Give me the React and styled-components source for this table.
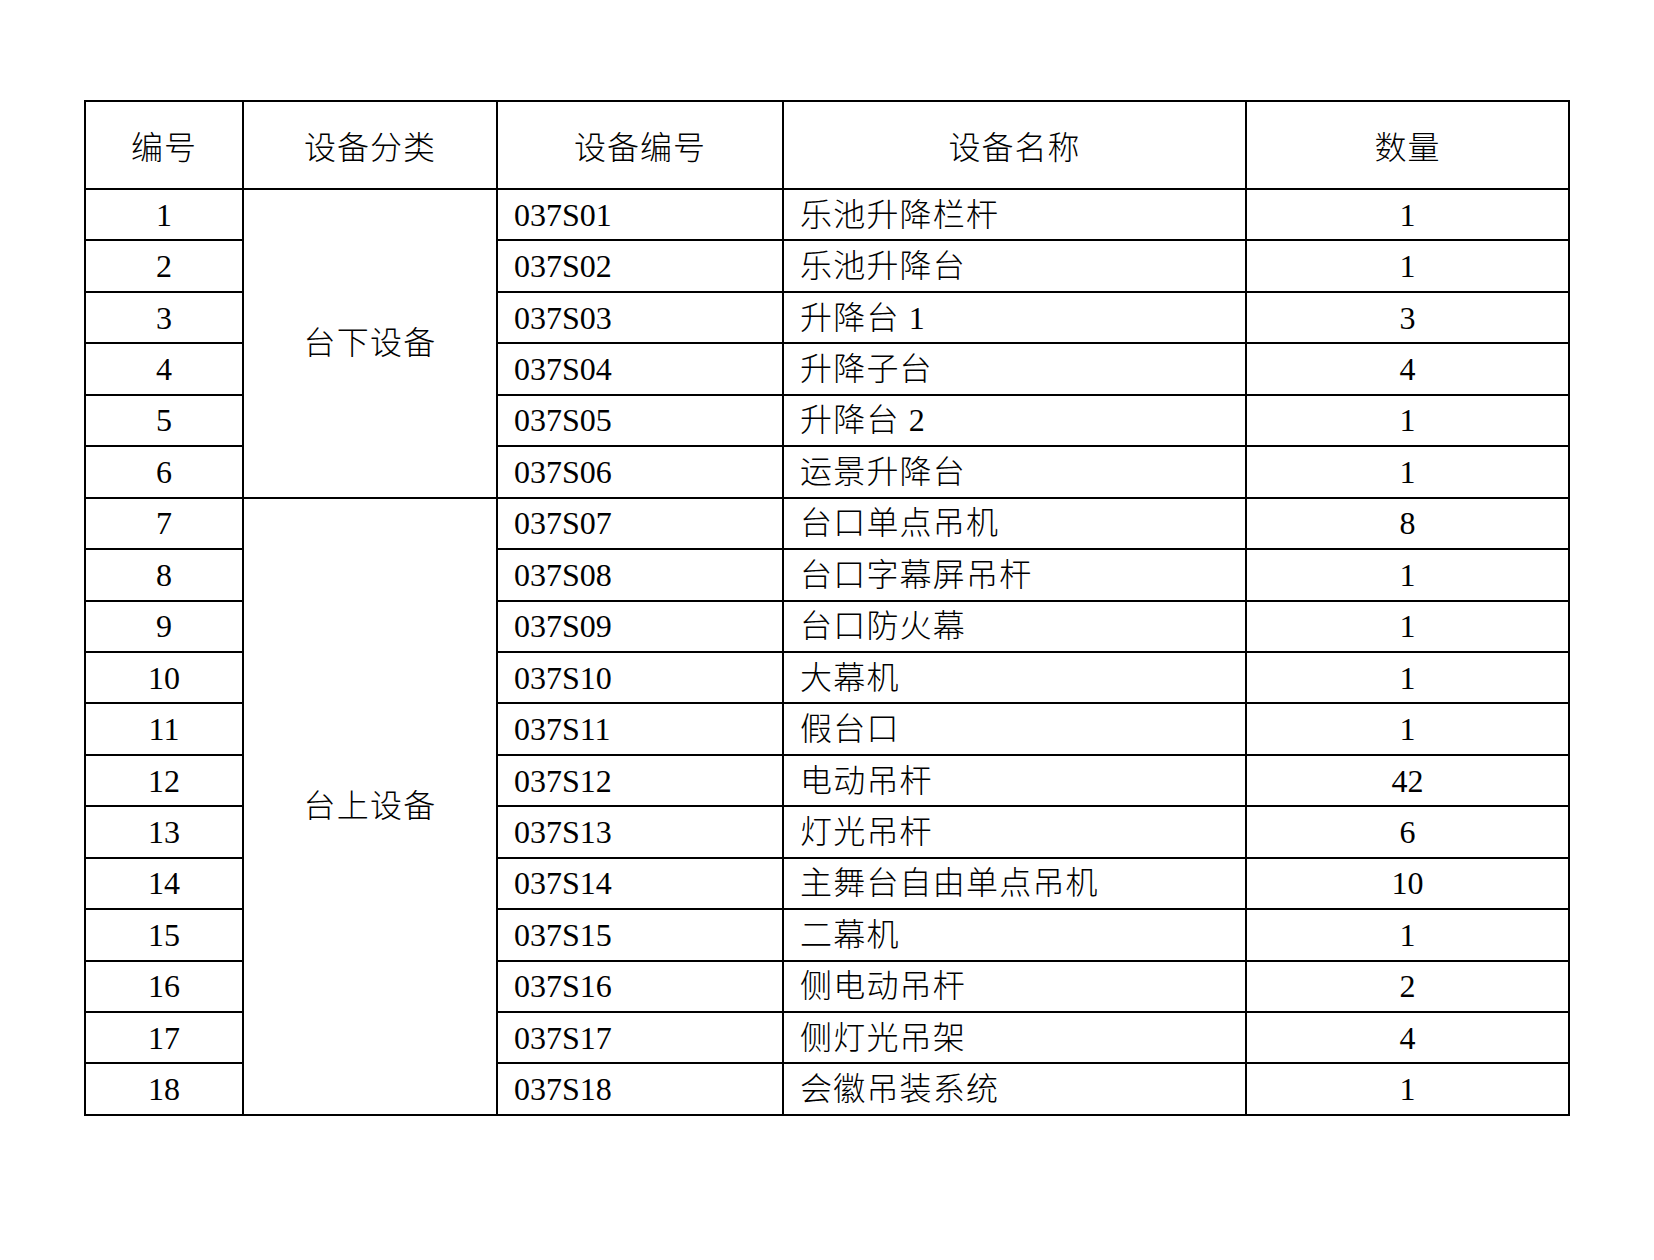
import styled, { createGlobalStyle } from "styled-components"

const GlobalStyle = createGlobalStyle`
  html, body {
    margin: 0;
    padding: 0;
    background: #FFF;
  }
  body {
    font-family: "Liberation Serif", "Noto Sans CJK SC", serif;
    color: #000;
  }
`

const Page = styled.div`
  width: 1654px;
  min-height: 1260px;
  padding: 100px 0 0 84px;
  box-sizing: border-box;
  background: #FFF;
`

const Table = styled.table`
  width: 1484px;
  table-layout: fixed;
  border-collapse: collapse;
  font-family: "Liberation Serif", "Noto Sans CJK SC", serif;
  font-size: 32px;
  font-weight: 300;
  color: #000;
`

const HeadRow = styled.tr`
  height: 88px;
`

const Row = styled.tr`
  height: 51.45px;
`

const HeadCell = styled.th`
  border: 2px solid #000;
  font-weight: 300;
  text-align: center;
  vertical-align: middle;
  padding: 0;
  letter-spacing: 1px;
`

const Cell = styled.td`
  border: 2px solid #000;
  padding: 0 0 0 ${(p) => (p.$left ? "16px" : "0")};
  text-align: ${(p) => (p.$left ? "left" : "center")};
  letter-spacing: ${(p) => (p.$spaced ? "1.2px" : "0")};
  vertical-align: middle;
  line-height: 1;
  white-space: nowrap;
`

const columns = [158, 254, 286, 463, 323]

const headers = ["编号", "设备分类", "设备编号", "设备名称", "数量"]

const rows = [
  ["乐池升降栏杆", 1],
  ["乐池升降台", 1],
  ["升降台 1", 3],
  ["升降子台", 4],
  ["升降台 2", 1],
  ["运景升降台", 1],
  ["台口单点吊机", 8],
  ["台口字幕屏吊杆", 1],
  ["台口防火幕", 1],
  ["大幕机", 1],
  ["假台口", 1],
  ["电动吊杆", 42],
  ["灯光吊杆", 6],
  ["主舞台自由单点吊机", 10],
  ["二幕机", 1],
  ["侧电动吊杆", 2],
  ["侧灯光吊架", 4],
  ["会徽吊装系统", 1],
]

const groups = { 0: ["台下设备", 6], 6: ["台上设备", 12] }

const App = () => {
  return (
    <Page>
      <GlobalStyle />
      <Table>
        <colgroup>
          {columns.map((w, i) => (
            <col key={i} style={{ width: w }} />
          ))}
        </colgroup>
        <thead>
          <HeadRow>
            {headers.map((h) => (
              <HeadCell key={h}>{h}</HeadCell>
            ))}
          </HeadRow>
        </thead>
        <tbody>
          {rows.map(([name, qty], i) => {
            const code = "037S" + String(i + 1).padStart(2, "0")
            const group = groups[i]
            return (
              <Row key={code}>
                <Cell>{i + 1}</Cell>
                {group && <Cell rowSpan={group[1]} $spaced>{group[0]}</Cell>}
                <Cell $left>{code}</Cell>
                <Cell $left $spaced>{name}</Cell>
                <Cell>{qty}</Cell>
              </Row>
            )
          })}
        </tbody>
      </Table>
    </Page>
  )
}

export default App
